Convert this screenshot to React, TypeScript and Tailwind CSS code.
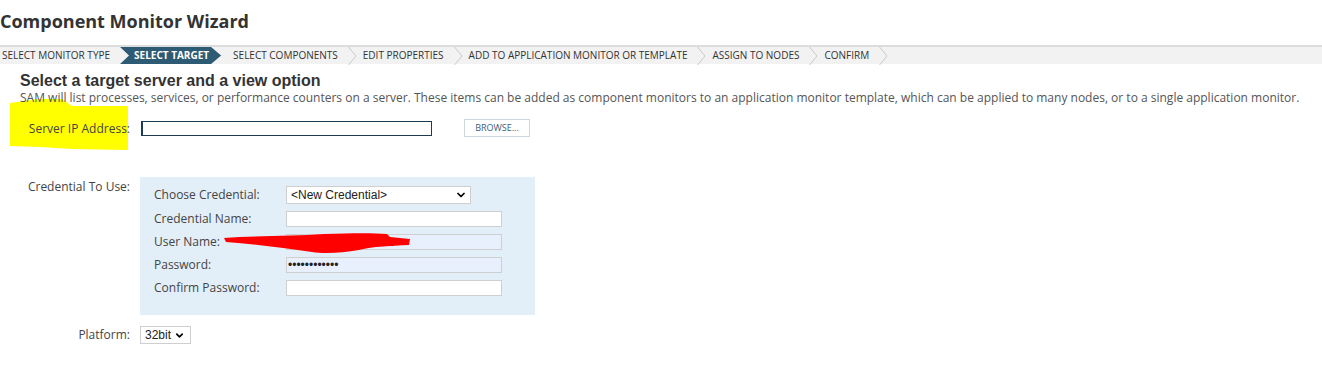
import { ChevronDown } from 'lucide-react';

const steps = [
  'Select Monitor Type',
  'Select Target',
  'Select Components',
  'Edit Properties',
  'Add to Application Monitor or Template',
  'Assign to Nodes',
  'Confirm',
];
const activeStep = 1;

function Chevron() {
  return (
    <svg width="9" height="18" viewBox="0 0 9 18" className="ml-[10px] mr-[6px] shrink-0">
      <polyline points="0.5,0 8,9 0.5,18" fill="none" stroke="#c9c9c9" strokeWidth="1" />
    </svg>
  );
}

function Breadcrumb() {
  return (
    <div className="flex h-[19px] items-center border-t-2 border-[#dcdcdc] bg-[#f2f2f2] text-[10px] uppercase text-[#333]">
      {steps.map((s, i) => {
        if (i === activeStep) {
          return (
            <div
              key={s}
              className="ml-[10px] mr-[12px] flex h-full items-center bg-[#2d5b74] pl-[14px] pr-[12px] font-bold text-white [clip-path:polygon(0_0,calc(100%-10px)_0,100%_50%,calc(100%-10px)_100%,0_100%,9px_50%)]"
            >
              {s}
            </div>
          );
        }
        return (
          <div key={s} className="flex h-full items-center">
            <span className={i === 0 ? 'pl-[2px]' : ''}>{s}</span>
            {i + 1 !== activeStep && <Chevron />}
          </div>
        );
      })}
    </div>
  );
}

function Field({ value, filled }: { value?: string; filled?: boolean }) {
  return (
    <div
      className={`flex h-[16px] w-[216px] items-center border border-[#cfcfcf] px-[1px] font-['Liberation_Sans',sans-serif] text-[12px] leading-none text-[#222] ${
        filled ? 'bg-[#e8f0fe]' : 'bg-white'
      }`}
    >
      {value}
    </div>
  );
}

const credRows = [
  { label: 'Credential Name:' },
  { label: 'User Name:', filled: true },
  { label: 'Password:', filled: true, value: '••••••••••••' },
  { label: 'Confirm Password:' },
];

export default function App() {
  return (
    <div className="relative h-[373px] w-[1322px] overflow-hidden bg-white font-['Open_Sans',sans-serif] text-[#444]">
      {/* highlighter mark */}
      <svg className="absolute left-0 top-0" width="140" height="160">
        <polygon
          points="10,103 38,99 62,99 72,106 128,106 128,150 72,149 40,147 10,146"
          fill="#ffff00"
        />
      </svg>

      <div className="relative">
        <h1 className="pt-[9px] text-[18px] font-bold leading-[24px] text-[#333]">
          Component Monitor Wizard
        </h1>
        <div className="mt-[12px]">
          <Breadcrumb />
        </div>

        <div className="pl-[20px] pt-[8px]">
          <h2 className="font-['Liberation_Sans',sans-serif] text-[16px] font-bold leading-[18px] text-[#333]">
            Select a target server and a view option
          </h2>
          <p className="text-[12px] leading-[16px] text-[#555]">
            SAM will list processes, services, or performance counters on a server. These items can be added as
            component monitors to an application monitor template, which can be applied to many nodes, or to a single
            application monitor.
          </p>
        </div>

        <div className="mt-[13px] grid grid-cols-[130px_1fr] gap-x-[10px] text-[12px]">
          {/* Server IP */}
          <div className="flex h-[18px] items-center justify-end pt-[2px] text-[#444]">Server IP Address:</div>
          <div className="flex items-center">
            <div className="ml-[1px] h-[15px] w-[291px] border border-l-2 border-[#1d3c52] bg-white" />
            <button className="ml-[32px] h-[18px] w-[66px] border border-[#cfd6dc] bg-white text-[9px] text-[#3c5e77]">
              BROWSE...
            </button>
          </div>

          {/* Credentials */}
          <div className="mt-[40px] flex justify-end pt-[1px] text-[#444]">Credential To Use:</div>
          <div className="mt-[40px]">
            <div className="relative w-[395px] bg-[#e3eff8] pb-[19px] pl-[14px] pt-[9px]">
              <div className="flex h-[18px] items-center">
                <span className="w-[132px]">Choose Credential:</span>
                <div className="flex h-[18px] w-[185px] items-center justify-between border border-[#cfcfcf] bg-white pl-[4px] pr-[3px] font-['Liberation_Sans',sans-serif] text-[12px] text-[#222]">
                  &lt;New Credential&gt;
                  <ChevronDown size={12} strokeWidth={3.5} className="text-black" />
                </div>
              </div>
              {credRows.map((r) => (
                <div key={r.label} className="mt-[7px] flex h-[16px] items-center">
                  <span className="w-[132px]">{r.label}</span>
                  <Field filled={r.filled} value={r.value} />
                </div>
              ))}
              {/* redaction scribble */}
              <svg className="absolute left-[84px] top-[56px]" width="190" height="24">
                <path
                  d="M0,5 C30,3 70,3 100,1 C130,0 150,0 163,1 L166,4 L186,6 L185,12 C165,13 150,13 135,17 C118,20 100,21 88,19 C60,15 30,11 2,9 Z"
                  fill="#ff0000"
                />
                <path d="M60,6 L165,4 L170,13 L100,14 Z" fill="#ff0000" />
              </svg>
            </div>
          </div>

          {/* Platform */}
          <div className="mt-[11px] flex h-[18px] items-center justify-end">Platform:</div>
          <div className="mt-[11px]">
            <div className="flex h-[18px] w-[51px] items-center gap-[3px] border border-[#cfcfcf] bg-white pl-[4px] font-['Liberation_Sans',sans-serif] text-[12px] text-[#222]">
              32bit
              <ChevronDown size={11} strokeWidth={3.5} className="text-black" />
            </div>
          </div>
        </div>
      </div>
    </div>
  );
}
